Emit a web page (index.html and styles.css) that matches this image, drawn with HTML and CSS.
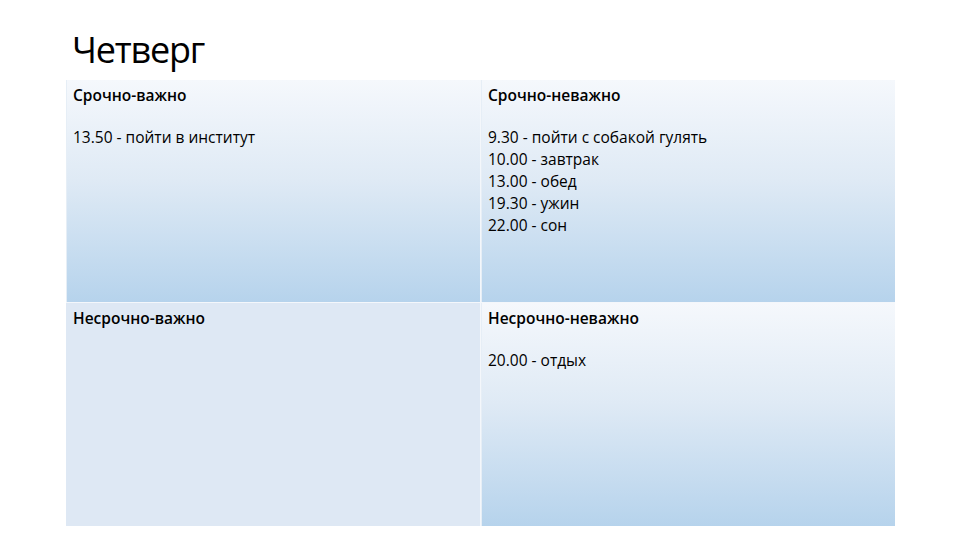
FILE: index.html
```html
<!DOCTYPE html>
<html lang="ru">
<head>
<meta charset="utf-8">
<link rel="stylesheet" href="styles.css">
</head>
<body>
<div class="slide">
  <h1 class="title">Четверг</h1>
  <div class="table">
    <div class="cell grad">
      <p class="head">Срочно-важно</p>
      <p class="line">13.50 - пойти в институт</p>
    </div>
    <div class="cell grad">
      <p class="head">Срочно-неважно</p>
      <p class="line">9.30 - пойти с собакой гулять</p>
      <p class="line">10.00 - завтрак</p>
      <p class="line">13.00 - обед</p>
      <p class="line">19.30 - ужин</p>
      <p class="line">22.00 - сон</p>
    </div>
    <div class="cell flat">
      <p class="head">Несрочно-важно</p>
    </div>
    <div class="cell grad">
      <p class="head">Несрочно-неважно</p>
      <p class="line">20.00 - отдых</p>
    </div>
  </div>
</div>
</body>
</html>
```
FILE: styles.css
```css
html, body {
  margin: 0;
  padding: 0;
  background: #ffffff;
}
.slide {
  width: 960px;
  height: 540px;
  display: flex;
  flex-direction: column;
  font-family: "Open Sans", "Noto Sans", sans-serif;
  color: #000;
}
.title {
  margin: 0;
  padding: 30px 0 0 72px;
  height: 80px;
  box-sizing: border-box;
  font-size: 36px;
  line-height: 40px;
  font-weight: 400;
  letter-spacing: -1.2px;
}
.table {
  margin-left: 66px;
  width: 829px;
  display: grid;
  grid-template-columns: 414px 414px;
  grid-template-rows: 222px 223px;
  gap: 1px;
  background: #f4f7fb;
}
.cell {
  padding: 4px 7px 0 7px;
  box-sizing: border-box;
  font-size: 15.5px;
}
.grad {
  background: linear-gradient(to bottom, #f5f8fc 0%, #dfeaf5 45%, #b6d3ec 100%);
  box-shadow: inset 1px 0 0 #e6eef6;
}
.flat {
  background: #dee8f4;
}
.head {
  margin: 0 0 20px 0;
  line-height: 22px;
  font-weight: 600;
}
.line {
  margin: 0;
  line-height: 22px;
}
```
